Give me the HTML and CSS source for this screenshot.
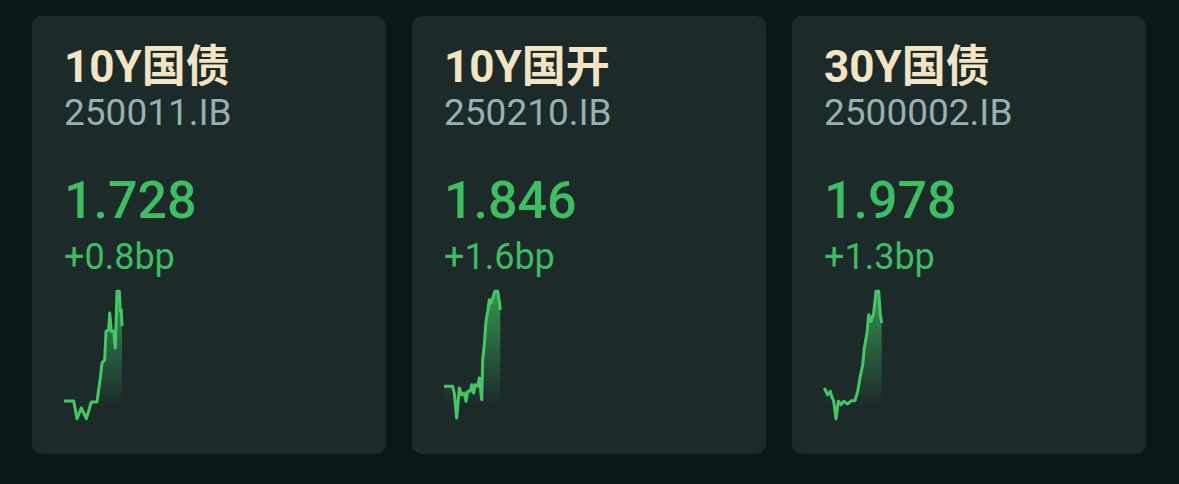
FILE: index.html
```html
<!DOCTYPE html>
<html lang="zh-CN">
<head>
  <meta charset="UTF-8">
  <title>国债收益率</title>
  <link rel="stylesheet" href="styles.css">
</head>
<body>

  <div class="cards">

    <div class="card">
      <div class="bond-name">10Y国债</div>
      <div class="bond-code">250011.IB</div>
      <div class="bond-yield">1.728</div>
      <div class="bond-change">+0.8bp</div>
      <svg class="spark" viewBox="0 0 60 130" width="60" height="130">
        <defs>
          <linearGradient id="fill1" x1="0" y1="0" x2="0" y2="1">
            <stop offset="0" stop-color="#3fc263" stop-opacity="0.7"/>
            <stop offset="0.9" stop-color="#3fc263" stop-opacity="0"/>
          </linearGradient>
        </defs>
        <path fill="url(#fill1)" d="M0 111 L9.7 111 L13 128.7 L17.3 118 L22.3 128.7 L27.3 112 L33 112 L36.3 88 L38 73 L40.7 69.7 L42 41.3 L44.7 39.7 L45.7 23 L47.3 41.3 L49.7 41.3 L51.3 58 L53 1.3 L55.3 1.3 L56.3 21.3 L57.3 19.7 L58 36.3 L58 125 L0 125 Z"/>
        <path class="spark-line" d="M0 111 L9.7 111 L13 128.7 L17.3 118 L22.3 128.7 L27.3 112 L33 112 L36.3 88 L38 73 L40.7 69.7 L42 41.3 L44.7 39.7 L45.7 23 L47.3 41.3 L49.7 41.3 L51.3 58 L53 1.3 L55.3 1.3 L56.3 21.3 L57.3 19.7 L58 36.3"/>
      </svg>
    </div>

    <div class="card">
      <div class="bond-name">10Y国开</div>
      <div class="bond-code">250210.IB</div>
      <div class="bond-yield">1.846</div>
      <div class="bond-change">+1.6bp</div>
      <svg class="spark" viewBox="0 0 60 130" width="60" height="130">
        <defs>
          <linearGradient id="fill2" x1="0" y1="0" x2="0" y2="1">
            <stop offset="0" stop-color="#3fc263" stop-opacity="0.7"/>
            <stop offset="0.9" stop-color="#3fc263" stop-opacity="0"/>
          </linearGradient>
        </defs>
        <path fill="url(#fill2)" d="M0 96.3 L8.7 96.3 L10.3 103 L12.7 128 L15.3 98 L17.7 104.7 L20.3 103 L22 111.3 L23.7 101.3 L26.3 101.3 L27.7 94.7 L29.7 103 L31 94.7 L33.7 96.3 L35.3 88 L37.7 109.7 L38.7 69.7 L40.3 54.7 L42 31.3 L43.7 21.3 L45.3 9.7 L47 13 L48.7 8 L51 1.3 L53.7 1.3 L55.3 11.3 L56.3 19.7 L56.3 125 L0 125 Z"/>
        <path class="spark-line" d="M0 96.3 L8.7 96.3 L10.3 103 L12.7 128 L15.3 98 L17.7 104.7 L20.3 103 L22 111.3 L23.7 101.3 L26.3 101.3 L27.7 94.7 L29.7 103 L31 94.7 L33.7 96.3 L35.3 88 L37.7 109.7 L38.7 69.7 L40.3 54.7 L42 31.3 L43.7 21.3 L45.3 9.7 L47 13 L48.7 8 L51 1.3 L53.7 1.3 L55.3 11.3 L56.3 19.7"/>
      </svg>
    </div>

    <div class="card">
      <div class="bond-name">30Y国债</div>
      <div class="bond-code">2500002.IB</div>
      <div class="bond-yield">1.978</div>
      <div class="bond-change">+1.3bp</div>
      <svg class="spark" viewBox="0 0 60 130" width="60" height="130">
        <defs>
          <linearGradient id="fill3" x1="0" y1="0" x2="0" y2="1">
            <stop offset="0" stop-color="#3fc263" stop-opacity="0.7"/>
            <stop offset="0.9" stop-color="#3fc263" stop-opacity="0"/>
          </linearGradient>
        </defs>
        <path fill="url(#fill3)" d="M0.3 98 L3.7 104.7 L6.3 101.3 L7.7 106.3 L9.7 111.3 L12 128.7 L14.3 111.3 L17 114.7 L19.7 111.3 L23.7 114 L27 110.7 L31 110.7 L33.7 101.3 L36.3 86.3 L38.7 74.7 L40.3 58 L43 43 L44.7 24.7 L47 31.3 L49.7 23 L52 1.3 L54.7 1.3 L56.3 24.7 L57.7 33 L57.7 125 L0.3 125 Z"/>
        <path class="spark-line" d="M0.3 98 L3.7 104.7 L6.3 101.3 L7.7 106.3 L9.7 111.3 L12 128.7 L14.3 111.3 L17 114.7 L19.7 111.3 L23.7 114 L27 110.7 L31 110.7 L33.7 101.3 L36.3 86.3 L38.7 74.7 L40.3 58 L43 43 L44.7 24.7 L47 31.3 L49.7 23 L52 1.3 L54.7 1.3 L56.3 24.7 L57.7 33"/>
      </svg>
    </div>

  </div>

</body>
</html>
```

FILE: styles.css
```css
body { margin: 0; background: #0c1818; font-family: Roboto, "Noto Sans CJK SC", sans-serif; }
.cards { display: grid; grid-template-columns: repeat(3, 354px); gap: 26px; padding: 16px 32px; }
.card { height: 438px; box-sizing: border-box; padding: 27px 32px 0 32px; background: #1c2a2a; border-radius: 10px; }
.bond-name { color: #f3e4c3; font-size: 44px; font-weight: 700; line-height: 48px; }
.bond-code { color: #98b0af; font-size: 37px; line-height: 44px; }
.bond-yield { margin-top: 38px; color: #3fbd62; font-size: 52px; font-weight: 500; line-height: 56px; }
.bond-change { margin-top: 6px; color: #3fbd62; font-size: 36px; line-height: 44px; }
.spark { display: block; margin-top: 11px; overflow: visible; }
.spark-line { fill: none; stroke: #46c766; stroke-width: 3; stroke-linejoin: round; }
```
